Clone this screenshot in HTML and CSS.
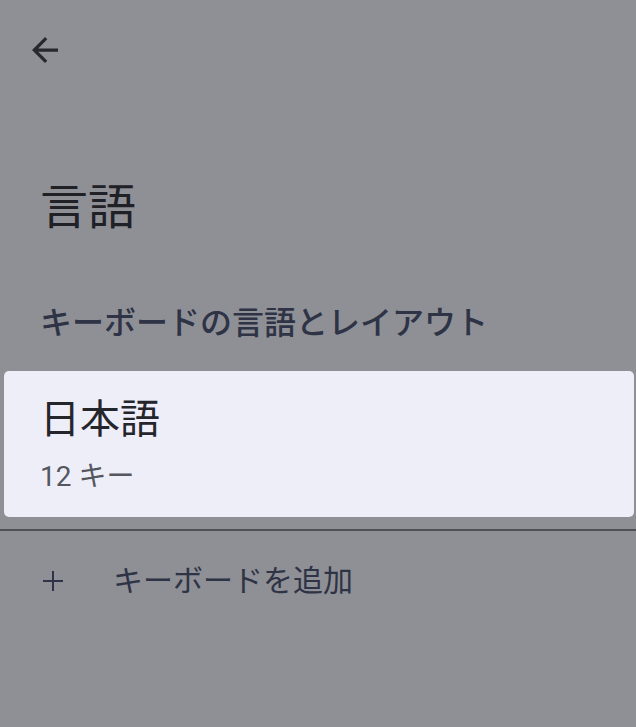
FILE: index.html
```html
<!DOCTYPE html>
<html lang="ja">
<head>
  <meta charset="UTF-8">
  <meta name="viewport" content="width=device-width, initial-scale=1.0">
  <title>言語</title>
  <link rel="stylesheet" href="styles.css">
</head>
<body>
  <div class="screen">
    <header class="topbar">
      <button class="back-btn" aria-label="戻る">
        <svg width="26" height="26" viewBox="4 4 16 16">
          <path d="M20 11H7.83l5.59-5.59L12 4l-8 8 8 8 1.41-1.41L7.83 13H20v-2z"/>
        </svg>
      </button>
    </header>

    <h1 class="page-title">言語</h1>

    <h2 class="section-title">キーボードの言語とレイアウト</h2>

    <div class="card">
      <div class="card-title">日本語</div>
      <div class="card-sub">12 キー</div>
    </div>

    <hr class="divider">

    <div class="add-row">
      <svg class="plus" width="20" height="20" viewBox="0 0 20 20">
        <path d="M10 0v20M0 10h20"/>
      </svg>
      <span>キーボードを追加</span>
    </div>
  </div>
</body>
</html>
```

FILE: styles.css
```css
:root {
  --bg: #8f9095;
  --card: #eeeef9;
  --text: #1f2127;
  --accent-text: #2e3346;
  --muted: #55575e;
  --line: #4f5056;
}

body {
  margin: 0;
  background: var(--bg);
  font-family: Roboto, "Noto Sans CJK JP", sans-serif;
  color: var(--text);
}

.screen {
  width: 636px;
  height: 727px;
  overflow: hidden;
}

.topbar {
  height: 100px;
  padding: 37px 0 0 32px;
  box-sizing: border-box;
}

.back-btn {
  display: block;
  padding: 0;
  border: none;
  background: none;
  cursor: pointer;
}

.back-btn svg {
  display: block;
  fill: #26282e;
}

.page-title {
  margin: 0;
  padding: 76px 0 0 40px;
  font-size: 48px;
  font-weight: 400;
  line-height: 64px;
}

.section-title {
  margin: 0;
  padding: 63px 0 0 40px;
  font-size: 32px;
  font-weight: 500;
  line-height: 40px;
  color: var(--accent-text);
}

.card {
  margin: 28px 2px 0 4px;
  height: 146px;
  box-sizing: border-box;
  padding: 23px 36px 0;
  background: var(--card);
  border-radius: 5px;
}

.card-title {
  font-size: 40px;
  line-height: 52px;
  color: #25262c;
}

.card-sub {
  margin-top: 13px;
  font-size: 28px;
  line-height: 36px;
  color: var(--muted);
}

.divider {
  margin: 12px 0 0;
  border: none;
  height: 2px;
  background: var(--line);
}

.add-row {
  display: flex;
  align-items: center;
  gap: 50px;
  padding: 26px 0 0 43px;
  font-size: 30px;
  line-height: 48px;
  color: var(--accent-text);
}

.plus {
  flex: none;
  stroke: #2f3348;
  stroke-width: 2;
}
```
